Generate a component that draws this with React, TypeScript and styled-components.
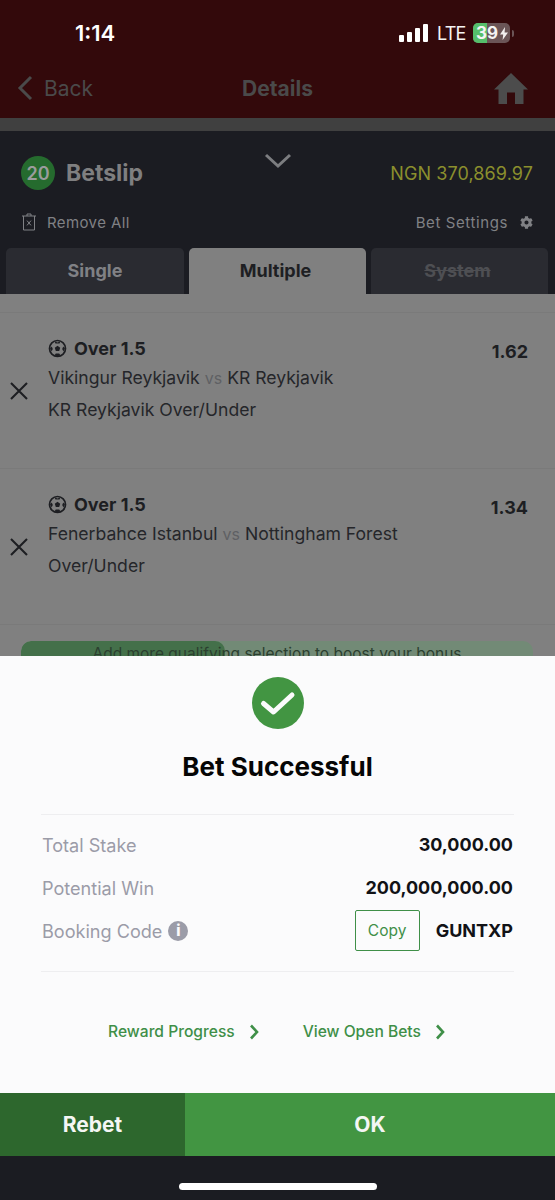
import React from "react";
import styled, { createGlobalStyle } from "styled-components";
import { FaCog } from "react-icons/fa";

const GlobalStyle = createGlobalStyle`
  html, body {
    margin: 0;
    padding: 0;
    background: #1b1c22;
    font-family: "Inter", "Liberation Sans", sans-serif;
  }
  * {
    box-sizing: border-box;
  }
`;

type Selection = {
  title: string;
  home: string;
  away: string;
  market: string;
  odds: string;
};

const selections: Array<Selection> = [
  {
    title: "Over 1.5",
    home: "Vikingur Reykjavik",
    away: "KR Reykjavik",
    market: "KR Reykjavik Over/Under",
    odds: "1.62",
  },
  {
    title: "Over 1.5",
    home: "Fenerbahce Istanbul",
    away: "Nottingham Forest",
    market: "Over/Under",
    odds: "1.34",
  },
];

const BallIcon = () => (
  <svg width="19" height="19" viewBox="0 0 19 19" fill="none">
    <circle cx="9.5" cy="9.5" r="8" stroke="#1d1e22" strokeWidth="1.7" />
    <path d="M9.5 6.8 12.2 8.8 11.2 12H7.8L6.8 8.8Z" fill="#1d1e22" />
    <path d="M6.6 2.2 9.5 3.4 12.4 2.2 11.6 4.4H7.4Z" fill="#1d1e22" />
    <path d="M2 9.2 3.8 7.4 4.8 10 3.6 12.6Z" fill="#1d1e22" />
    <path d="M17 9.2 15.2 7.4 14.2 10 15.4 12.6Z" fill="#1d1e22" />
    <path d="M6.4 16.4 7.8 14.6H11.2L12.6 16.4 9.5 17.2Z" fill="#1d1e22" />
  </svg>
);

const CloseIcon = () => (
  <svg width="20" height="20" viewBox="0 0 20 20" fill="none">
    <path d="M2 2 18 18M18 2 2 18" stroke="#1d1e22" strokeWidth="2.1" />
  </svg>
);

const App = () => {
  return (
    <Page>
      <GlobalStyle />
      <TopBar>
        <StatusBar>
          <Clock>1:14</Clock>
          <StatusIcons>
            <SignalBars>
              <SignalBar $height={7} />
              <SignalBar $height={10} />
              <SignalBar $height={14} />
              <SignalBar $height={18} />
            </SignalBars>
            <Lte>LTE</Lte>
            <Battery>
              <BatteryFill />
              <BatteryText>39</BatteryText>
              <svg width="8" height="13" viewBox="0 0 8 13">
                <path d="M5 0 0 7.5H3.2L2.6 13 8 5.4H4.6Z" fill="#f2eeee" />
              </svg>
            </Battery>
            <BatteryCap />
          </StatusIcons>
        </StatusBar>
        <NavBar>
          <BackLink>
            <svg width="16" height="26" viewBox="0 0 16 26" fill="none">
              <path d="M14 2 3 13 14 24" stroke="#4a4a4a" strokeWidth="3" />
            </svg>
            <span>Back</span>
          </BackLink>
          <NavTitle>Details</NavTitle>
          <svg width="34" height="31" viewBox="0 0 34 31">
            <path
              d="M17 0 34 16.5H29.5V31H21V19.5H13V31H4.5V16.5H0Z"
              fill="#4c4c4c"
            />
          </svg>
        </NavBar>
      </TopBar>
      <GreyBand />
      <BetslipPanel>
        <BetslipHeader>
          <TitleGroup>
            <CountBadge>20</CountBadge>
            <BetslipTitle>Betslip</BetslipTitle>
          </TitleGroup>
          <Collapse width="28" height="16" viewBox="0 0 28 16" fill="none">
            <path d="M2 2 14 13 26 2" stroke="#7c7d80" strokeWidth="3" />
          </Collapse>
          <Balance>NGN 370,869.97</Balance>
        </BetslipHeader>
        <ActionRow>
          <ActionGroup>
            <svg width="14" height="18" viewBox="0 0 14 18" fill="none">
              <path
                d="M0 3H14M5 3V1H9V3M1.5 3V17H12.5V3M5 7.6 9 12.4M9 7.6 5 12.4"
                stroke="#808185"
                strokeWidth="1"
              />
            </svg>
            <ActionText $spacing={0.4}>Remove All</ActionText>
          </ActionGroup>
          <ActionGroup $gap={12}>
            <ActionText $spacing={0.6}>Bet Settings</ActionText>
            <FaCog size={13} color="#808185" />
          </ActionGroup>
        </ActionRow>
        <Tabs>
          <Tab $width={178}>Single</Tab>
          <Tab $width={177} $active>
            Multiple
          </Tab>
          <Tab $width={177} $disabled>
            System
          </Tab>
        </Tabs>
      </BetslipPanel>
      <SelectionList>
        <ListTop />
        {selections.map((item, index) => (
          <SelectionRow key={index}>
            <RemoveButton>
              <CloseIcon />
            </RemoveButton>
            <SelectionBody>
              <SelectionHead>
                <SelectionTitle>
                  <BallIcon />
                  <span>{item.title}</span>
                </SelectionTitle>
                <Odds>{item.odds}</Odds>
              </SelectionHead>
              <MatchLine>
                {item.home} <Versus>vs</Versus> {item.away}
              </MatchLine>
              <MarketLine>{item.market}</MarketLine>
            </SelectionBody>
          </SelectionRow>
        ))}
        <BonusTrack>
          <BonusFill style={{ width: `${(204 / 513) * 100}%` }} />
          <BonusText>Add more qualifying selection to boost your bonus</BonusText>
        </BonusTrack>
      </SelectionList>
      <Sheet>
        <SuccessIcon width="52" height="52" viewBox="0 0 52 52">
          <circle cx="26" cy="26" r="26" fill="#429542" />
          <path
            d="M11.5 26.5 21.5 35 40 18"
            fill="none"
            stroke="#fbfbfc"
            strokeWidth="5"
            strokeLinecap="round"
            strokeLinejoin="round"
          />
        </SuccessIcon>
        <SheetTitle>Bet Successful</SheetTitle>
        <Summary>
          <SummaryRow>
            <SummaryLabel>Total Stake</SummaryLabel>
            <SummaryValue>30,000.00</SummaryValue>
          </SummaryRow>
          <SummaryRow>
            <SummaryLabel>Potential Win</SummaryLabel>
            <SummaryValue>200,000,000.00</SummaryValue>
          </SummaryRow>
          <SummaryRow>
            <SummaryLabel>
              Booking Code
              <InfoBadge>i</InfoBadge>
            </SummaryLabel>
            <CodeGroup>
              <CopyButton>Copy</CopyButton>
              <SummaryValue>GUNTXP</SummaryValue>
            </CodeGroup>
          </SummaryRow>
        </Summary>
        <Links>
          <LinkItem>
            Reward Progress
            <LinkChevron width="10" height="16" viewBox="0 0 10 16" fill="none">
              <path d="M2 1.5 8 8 2 14.5" stroke="#3f8f48" strokeWidth="2.6" />
            </LinkChevron>
          </LinkItem>
          <LinkItem>
            View Open Bets
            <LinkChevron width="10" height="16" viewBox="0 0 10 16" fill="none">
              <path d="M2 1.5 8 8 2 14.5" stroke="#3f8f48" strokeWidth="2.6" />
            </LinkChevron>
          </LinkItem>
        </Links>
      </Sheet>
      <Footer>
        <RebetButton>Rebet</RebetButton>
        <OkButton>OK</OkButton>
      </Footer>
      <HomeArea>
        <HomeIndicator />
      </HomeArea>
    </Page>
  );
};

const Page = styled.div`
  width: 555px;
  height: 1200px;
  display: flex;
  flex-direction: column;
  overflow: hidden;
  background: #1b1c22;
`;

const TopBar = styled.header`
  height: 118px;
  background: #33090b;
  display: flex;
  flex-direction: column;
`;

const StatusBar = styled.div`
  height: 58px;
  padding: 8px 41px 0 75px;
  display: flex;
  align-items: center;
  justify-content: space-between;
`;

const Clock = styled.span`
  color: #fff;
  font-size: 22px;
  font-weight: 600;
`;

const StatusIcons = styled.div`
  display: flex;
  align-items: center;
`;

const SignalBars = styled.div`
  display: flex;
  align-items: flex-end;
  gap: 3px;
  margin-right: 9px;
`;

const SignalBar = styled.span<{ $height: number }>`
  width: 5px;
  height: ${(props) => props.$height}px;
  background: #fff;
  border-radius: 1px;
`;

const Lte = styled.span`
  color: #f4f4f4;
  font-size: 18px;
  font-weight: 400;
  width: 36px;
  letter-spacing: -0.8px;
`;

const Battery = styled.div`
  position: relative;
  width: 37px;
  height: 20px;
  border-radius: 5px;
  background: #6b5557;
  overflow: hidden;
  display: flex;
  align-items: center;
  padding-left: 3px;
  gap: 0;
`;

const BatteryFill = styled.span`
  position: absolute;
  left: 0;
  top: 0;
  bottom: 0;
  width: 14px;
  background: #55bf6b;
`;

const BatteryText = styled.span`
  position: relative;
  color: #f4f4f4;
  font-size: 17px;
  font-weight: 700;
  line-height: 20px;
  width: 24px;
`;

const BatteryCap = styled.span`
  width: 2px;
  height: 7px;
  margin-left: 2px;
  border-radius: 0 2px 2px 0;
  background: #6b5557;
`;

const NavBar = styled.nav`
  flex: 1;
  padding: 0 27px 0 17px;
  display: flex;
  align-items: center;
  justify-content: space-between;
`;

const BackLink = styled.div`
  display: flex;
  align-items: center;
  gap: 11px;
  width: 120px;
  color: #4a4a4a;
  font-size: 21px;
`;

const NavTitle = styled.span`
  color: #4a4a4a;
  font-size: 21px;
  font-weight: 700;
  margin-right: 76px;
`;

const GreyBand = styled.div`
  height: 13px;
  background: #404040;
`;

const BetslipPanel = styled.section`
  height: 163px;
  background: #1b1c22;
  display: flex;
  flex-direction: column;
  padding-top: 23px;
`;

const BetslipHeader = styled.div`
  height: 38px;
  padding: 0 22px 0 21px;
  display: flex;
  align-items: center;
  justify-content: space-between;
  position: relative;
`;

const TitleGroup = styled.div`
  display: flex;
  align-items: center;
  gap: 11px;
`;

const CountBadge = styled.span`
  width: 34px;
  height: 34px;
  border-radius: 50%;
  background: #256b2e;
  color: #9a9c9c;
  font-size: 18px;
  font-weight: 600;
  display: flex;
  align-items: center;
  justify-content: center;
`;

const BetslipTitle = styled.span`
  color: #7f7f80;
  font-size: 23px;
  font-weight: 700;
`;

const Collapse = styled.svg`
  position: absolute;
  left: 264px;
  top: -1px;
`;

const Balance = styled.span`
  color: #8b8f2d;
  font-size: 18px;
  letter-spacing: 0.1px;
`;

const ActionRow = styled.div`
  margin-top: 18px;
  height: 24px;
  padding: 0 22px;
  display: flex;
  align-items: center;
  justify-content: space-between;
`;

const ActionGroup = styled.div<{ $gap?: number }>`
  display: flex;
  align-items: center;
  gap: ${(props) => props.$gap ?? 11}px;
`;

const ActionText = styled.span<{ $spacing: number }>`
  color: #808185;
  font-size: 15px;
  letter-spacing: ${(props) => props.$spacing}px;
`;

const Tabs = styled.div`
  margin-top: 14px;
  height: 46px;
  padding: 0 7px 0 6px;
  display: flex;
  gap: 5px;
`;

const Tab = styled.div<{ $width: number; $active?: boolean; $disabled?: boolean }>`
  flex: none;
  width: ${(props) => props.$width}px;
  border-radius: 5px 5px 0 0;
  display: flex;
  align-items: center;
  justify-content: center;
  padding-bottom: 2px;
  padding-right: ${(props) => (props.$active ? 4 : props.$disabled ? 4 : 0)}px;
  font-size: 18px;
  font-weight: 700;
  background: ${(props) => (props.$active ? "#808080" : "#2a2b31")};
  color: ${(props) =>
    props.$active ? "#1e1f23" : props.$disabled ? "#4e4f53" : "#808185"};
  text-decoration: ${(props) => (props.$disabled ? "line-through" : "none")};
`;

const SelectionList = styled.section`
  height: 362px;
  background: #808080;
  display: flex;
  flex-direction: column;
  overflow: hidden;
`;

const ListTop = styled.div`
  height: 19px;
  flex: none;
  border-bottom: 1px solid #7a7a7a;
`;

const SelectionRow = styled.div`
  height: 156px;
  flex: none;
  display: flex;
  border-bottom: 1px solid #7a7a7a;
  padding: 25px 27px 0 9px;
`;

const RemoveButton = styled.div`
  width: 39px;
  padding-top: 43px;
  flex: none;
`;

const SelectionBody = styled.div`
  flex: 1;
  display: flex;
  flex-direction: column;
`;

const SelectionHead = styled.div`
  height: 22px;
  display: flex;
  align-items: center;
  justify-content: space-between;
`;

const SelectionTitle = styled.div`
  display: flex;
  align-items: center;
  gap: 7px;
  margin-top: -2px;
  color: #1d1e22;
  font-size: 18px;
  font-weight: 700;
`;

const Odds = styled.span`
  color: #1d1e22;
  font-size: 18px;
  font-weight: 700;
  margin-top: 4px;
`;

const MatchLine = styled.div`
  margin-top: 6px;
  height: 24px;
  line-height: 24px;
  color: #25262a;
  font-size: 17.6px;
  white-space: nowrap;
`;

const Versus = styled.span`
  color: #5f6064;
  font-size: 16px;
`;

const MarketLine = styled.div`
  margin-top: 8px;
  height: 24px;
  line-height: 24px;
  color: #25262a;
  font-size: 17.6px;
`;

const BonusTrack = styled.div`
  position: relative;
  flex: none;
  margin: 16px 22px 0 21px;
  height: 30px;
  border-radius: 10px;
  background: #728a76;
  overflow: hidden;
`;

const BonusFill = styled.div`
  position: absolute;
  left: 0;
  top: 0;
  bottom: 0;
  border-radius: 10px;
  background: #44704a;
`;

const BonusText = styled.div`
  position: relative;
  text-align: center;
  color: #2b3f2f;
  font-size: 15.5px;
  line-height: 25px;
`;

const Sheet = styled.section`
  height: 437px;
  background: #fbfbfc;
  display: flex;
  flex-direction: column;
  align-items: center;
  padding-top: 21px;
`;

const SuccessIcon = styled.svg`
  flex: none;
`;

const SheetTitle = styled.h2`
  margin: 21px 0 0;
  height: 34px;
  line-height: 34px;
  color: #050505;
  font-size: 26px;
  font-weight: 700;
`;

const Summary = styled.div`
  margin-top: 30px;
  width: 473px;
  height: 158px;
  padding: 8px 1px 0;
  border-top: 1px solid #eeeef0;
  border-bottom: 1px solid #eeeef0;
  display: flex;
  flex-direction: column;
`;

const SummaryRow = styled.div`
  height: 43px;
  display: flex;
  align-items: center;
  justify-content: space-between;
`;

const SummaryLabel = styled.span`
  display: flex;
  align-items: center;
  gap: 6px;
  color: #9b9ca8;
  font-size: 18.1px;
`;

const SummaryValue = styled.span`
  color: #111216;
  font-size: 18px;
  font-weight: 700;
`;

const InfoBadge = styled.span`
  width: 20px;
  height: 20px;
  border-radius: 50%;
  background: #9b9ca8;
  color: #fbfbfc;
  font-size: 15px;
  font-weight: 800;
  display: flex;
  align-items: center;
  justify-content: center;
`;

const CodeGroup = styled.div`
  display: flex;
  align-items: center;
  gap: 16px;
`;

const CopyButton = styled.div`
  width: 65px;
  height: 41px;
  border: 1px solid #3f8f48;
  border-radius: 2px;
  color: #3f8f48;
  font-size: 15.5px;
  display: flex;
  align-items: center;
  justify-content: center;
`;

const Links = styled.div`
  margin-top: 50px;
  display: flex;
  justify-content: center;
  gap: 44px;
  padding-right: 2px;
`;

const LinkItem = styled.div`
  display: flex;
  align-items: center;
  gap: 14px;
  color: #3f8f48;
  font-size: 15.6px;
  font-weight: 500;
`;

const LinkChevron = styled.svg`
  flex: none;
`;

const Footer = styled.div`
  height: 63px;
  display: flex;
`;

const RebetButton = styled.div`
  width: 185px;
  background: #2d672d;
  color: #f4f6f4;
  font-size: 21px;
  font-weight: 700;
  display: flex;
  align-items: center;
  justify-content: center;
`;

const OkButton = styled.div`
  flex: 1;
  background: #429542;
  color: #f4f6f4;
  font-size: 21px;
  font-weight: 700;
  display: flex;
  align-items: center;
  justify-content: center;
`;

const HomeArea = styled.div`
  flex: 1;
  background: #1b1c22;
  display: flex;
  justify-content: center;
  padding-top: 27px;
`;

const HomeIndicator = styled.div`
  width: 198px;
  height: 7px;
  border-radius: 4px;
  background: #fff;
`;

export default App;
